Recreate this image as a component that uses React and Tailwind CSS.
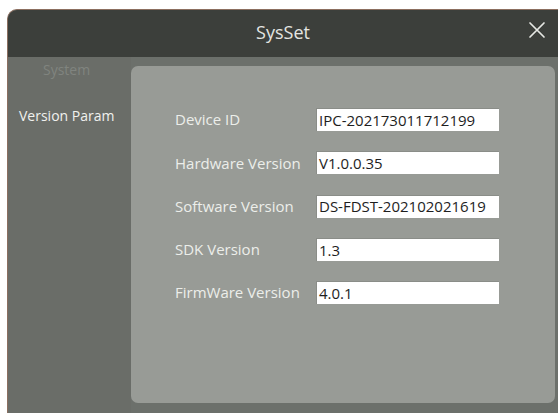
import React from 'react';

const params = [
  { label: 'Device ID', value: 'IPC-202173011712199' },
  { label: 'Hardware Version', value: 'V1.0.0.35' },
  { label: 'Software Version', value: 'DS-FDST-202102021619' },
  { label: 'SDK Version', value: '1.3' },
  { label: 'FirmWare Version', value: '4.0.1' },
];

const CloseIcon = () => (
  <svg width="18" height="18" viewBox="0 0 18 18" fill="none" stroke="#e6e8e4" strokeWidth="1.7" strokeLinecap="round">
    <path d="M2 2 L16 16 M16 2 L2 16" />
  </svg>
);

const App = () => {
  return (
    <div className="w-[558px] h-[413px] bg-white pt-[9px] pl-[7px] overflow-hidden" style={{ fontFamily: '"Open Sans", "Noto Sans", sans-serif' }}>
      <div className="h-full flex flex-col rounded-tl-[10px] border-t border-l border-[#8c6f60] bg-[#6c706b] overflow-hidden">
        {/* title bar */}
        <div className="h-[47px] shrink-0 bg-[#3c3f3b] relative flex items-center justify-center">
          <span className="text-[18px] text-[#e4e6e2] -mt-[2px]">SysSet</span>
          <button className="absolute right-[12px] top-[11px]">
            <CloseIcon />
          </button>
        </div>

        <div className="flex-1 flex">
          {/* side menu */}
          <div className="w-[123px] shrink-0 flex flex-col bg-[#6a6d68]">
            <div className="mt-[2px] pl-[35px] text-[14px] text-[#80847f]">System</div>
            <div className="mt-[25px] pl-[11px] text-[14px] text-[#f0f1ee]">Version Param</div>
          </div>

          {/* parameter panel */}
          <div className="flex-1 mt-[9px] mb-[10px] mr-[3px] rounded-[7px] bg-[#989b96] pt-[42px] pl-[44px]">
            <div className="flex flex-col gap-[20.3px]">
              {params.map((p) => (
                <div key={p.label} className="flex items-center h-[23px]">
                  <span className="w-[141px] text-[15px] text-[#eceeea] whitespace-nowrap">{p.label}</span>
                  <div className="w-[183px] h-[23px] bg-white border-t border-l border-[#8a8d88] flex items-center pl-[2px] text-[15px] text-[#1e1e1e] whitespace-nowrap">
                    {p.value}
                  </div>
                </div>
              ))}
            </div>
          </div>
        </div>
      </div>
    </div>
  );
};

export default App;
